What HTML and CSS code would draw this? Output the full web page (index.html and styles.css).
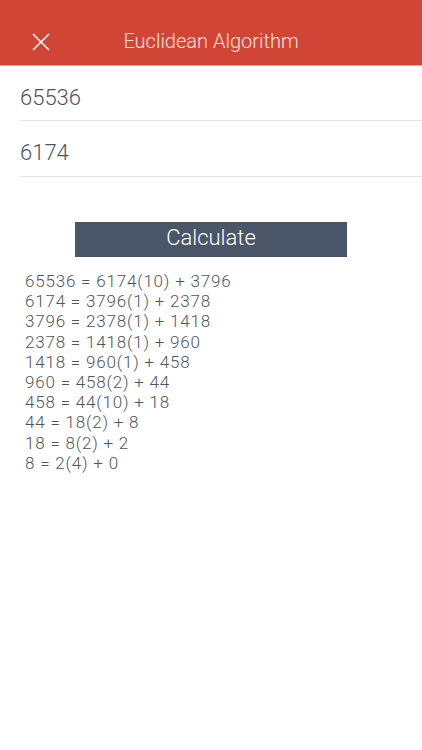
FILE: index.html
```html
<!DOCTYPE html>
<html>
<head>
<meta charset="utf-8">
<link rel="stylesheet" href="styles.css">
</head>
<body>
<header class="bar">
  <button class="close" aria-label="Close">
    <svg width="18" height="18" viewBox="0 0 18 18"><path d="M1 1L17 17M17 1L1 17" stroke="#fff" stroke-width="1.5" fill="none"/></svg>
  </button>
  <h1 class="title">Euclidean Algorithm</h1>
</header>
<main class="content">
  <div class="field">65536</div>
  <div class="field">6174</div>
  <div class="actions"><button class="calc">Calculate</button></div>
  <div class="results">
    <div>65536 = 6174(10) + 3796</div>
    <div>6174 = 3796(1) + 2378</div>
    <div>3796 = 2378(1) + 1418</div>
    <div>2378 = 1418(1) + 960</div>
    <div>1418 = 960(1) + 458</div>
    <div>960 = 458(2) + 44</div>
    <div>458 = 44(10) + 18</div>
    <div>44 = 18(2) + 8</div>
    <div>18 = 8(2) + 2</div>
    <div>8 = 2(4) + 0</div>
  </div>
</main>
</body>
</html>
```
FILE: styles.css
```css
html, body { margin: 0; padding: 0; background: #fff; }
body { font-family: Roboto, "Liberation Sans", sans-serif; font-weight: 300; width: 422px; }
.bar {
  height: 66px;
  background: #d14536;
  border-bottom: 1px solid #ec9a90;
  display: flex;
  align-items: center;
  position: relative;
  padding-top: 18px;
  box-sizing: border-box;
}
.close {
  background: none; border: 0; padding: 0; margin-left: 32px;
  width: 18px; height: 18px; display: flex;
}
.title {
  margin: 0; font-weight: 300; font-size: 20px; color: #fbe3df;
  position: absolute; left: 0; right: 0; bottom: 12px; text-align: center;
  pointer-events: none;
}
.content { padding-left: 20px; }
.field {
  height: 55px; box-sizing: border-box; padding-top: 20px;
  font-size: 22px; color: #4b5563; line-height: 24px;
  border-bottom: 1px solid #e6e6e6;
}
.field + .field { height: 56px; }
.actions { display: flex; justify-content: center; padding: 45px 0 0; margin-left: -20px; }
.calc {
  width: 272px; height: 35px; background: #4a5667; color: #fff; border: 0;
  font-family: inherit; font-weight: 300; font-size: 22px; padding: 0 0 4px;
}
.results { padding: 14px 0 0 5px; font-size: 17px; line-height: 20.2px; letter-spacing: 0.8px; color: #50565d; }
```
